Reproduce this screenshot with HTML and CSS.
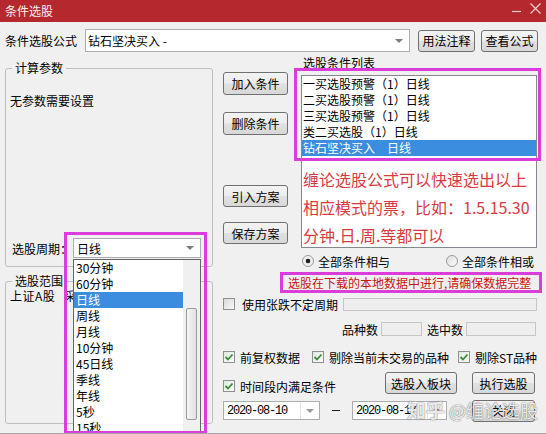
FILE: index.html
```html
<!DOCTYPE html>
<html lang="zh-CN">
<head>
<meta charset="utf-8">
<title>条件选股</title>
<link rel="stylesheet" href="styles.css">
</head>
<body>
<div class="window">
  <div class="titlebar">
    <span class="title">条件选股</span>
    <span class="winctl">
      <svg class="ico-min" width="9" height="10" viewBox="0 0 9 10"><path d="M0 5.5h9"/></svg>
      <svg class="ico-close" width="11" height="11" viewBox="0 0 11 11"><path d="M0.5 0.5l10 10M10.5 0.5l-10 10"/></svg>
    </span>
  </div>
  <div class="content">
    <div class="formula-row">
      <span class="formula-label">条件选股公式</span>
      <div class="combo combo-formula"><span class="combo-text">钻石坚决买入 -</span><span class="combo-arrow"></span></div>
      <button class="btn btn-note">用法注释</button>
      <button class="btn btn-view">查看公式</button>
    </div>
    <div class="main">
      <div class="left">
        <fieldset class="group group-params">
          <legend>计算参数</legend>
          <div class="no-param">无参数需要设置</div>
          <div class="period-row">
            <span class="period-label">选股周期：</span>
            <div class="combo combo-period"><span class="combo-text">日线</span><span class="combo-arrow"></span></div>
          </div>
        </fieldset>
        <fieldset class="group group-range">
          <legend>选股范围</legend>
          <div class="range-row"><span>上证A股</span><span class="range-more">采用</span></div>
        </fieldset>
      </div>
      <div class="right">
        <div class="right-top">
          <div class="btn-col">
            <button class="btn btn-side b-add">加入条件</button>
            <button class="btn btn-side b-del">删除条件</button>
            <button class="btn btn-side b-import">引入方案</button>
            <button class="btn btn-side b-save">保存方案</button>
          </div>
          <div class="list-col">
            <div class="list-label">选股条件列表</div>
            <ul class="cond-list">
              <li>一买选股预警（1）日线</li>
              <li>二买选股预警（1）日线</li>
              <li>三买选股预警（1）日线</li>
              <li>类二买选股（1）日线</li>
              <li class="sel">钻石坚决买入　日线</li>
            </ul>
            <div class="note">
              <div>缠论选股公式可以快速选出以上</div>
              <div>相应模式的票，比如：1.5.15.30</div>
              <div>分钟.日.周.等都可以</div>
            </div>
          </div>
        </div>
        <div class="radio-row">
          <span class="radio checked"></span><span class="radio-label">全部条件相与</span>
          <span class="radio radio-or"></span><span class="radio-label">全部条件相或</span>
        </div>
        <div class="warn">选股在下载的本地数据中进行,请确保数据完整</div>
        <div class="chk-row1">
          <span class="chk"></span><span class="chk-label">使用张跌不定周期</span>
          <span class="field"></span>
        </div>
        <div class="count-row">
          <span>品种数</span><span class="count-box cb1"></span>
          <span class="count-label2">选中数</span><span class="count-box cb2"></span>
        </div>
        <div class="chk-row2">
          <span class="chk-item"><span class="chk on"><svg width="10" height="10" viewBox="0 0 10 10"><path d="M1.5 5l2.5 2.5 4.5-5"/></svg></span><span class="chk-text">前复权数据</span></span>
          <span class="chk-item ci2"><span class="chk on"><svg width="10" height="10" viewBox="0 0 10 10"><path d="M1.5 5l2.5 2.5 4.5-5"/></svg></span><span class="chk-text">剔除当前未交易的品种</span></span>
          <span class="chk-item ci3"><span class="chk on"><svg width="10" height="10" viewBox="0 0 10 10"><path d="M1.5 5l2.5 2.5 4.5-5"/></svg></span><span class="chk-text">剔除ST品种</span></span>
        </div>
        <div class="action-row">
          <span class="chk-item ci-time"><span class="chk on"><svg width="10" height="10" viewBox="0 0 10 10"><path d="M1.5 5l2.5 2.5 4.5-5"/></svg></span><span class="chk-text">时间段内满足条件</span></span>
          <button class="btn b-block">选股入板块</button>
          <button class="btn b-run">执行选股</button>
        </div>
        <div class="date-row">
          <div class="date d1"><span class="date-text">2020-08-10</span><span class="date-drop"><span class="combo-arrow"></span></span></div>
          <span class="dash"></span>
          <div class="date d2"><span class="date-text">2020-08-17</span><span class="date-drop"><span class="combo-arrow"></span></span></div>
          <button class="btn b-close">关闭</button>
        </div>
      </div>
    </div>
  </div>

  <div class="dropdown">
    <ul class="dd-items">
      <li>30分钟</li>
      <li>60分钟</li>
      <li class="sel">日线</li>
      <li>周线</li>
      <li>月线</li>
      <li>10分钟</li>
      <li>45日线</li>
      <li>季线</li>
      <li>年线</li>
      <li>5秒</li>
      <li>15秒</li>
    </ul>
    <div class="dd-scroll"><div class="dd-thumb"></div></div>
  </div>
  <div class="frame frame-period"></div>
  <div class="frame frame-list"></div>
  <div class="watermark"><b>知乎</b> @缠论选股</div>
</div>
</body>
</html>
```

FILE: styles.css
```css
* { box-sizing: border-box; }
body {
  margin: 0;
  font-family: "Noto Sans CJK SC", "Noto Sans", sans-serif;
  font-size: 12px;
  color: #000;
  background: #f0f0f0;
}
button { font: inherit; color: #000; }
ul { margin: 0; padding: 0; list-style: none; }

.window {
  position: relative;
  width: 546px;
  height: 434px;
  overflow: hidden;
  background: #f0f0f0;
  border-bottom: 1px solid #a9a9a9;
}

/* title bar */
.titlebar {
  height: 22px;
  background: #b5292e;
  display: flex;
  align-items: center;
  padding: 0 5px 0 5px;
  color: #fff;
}
.title { line-height: 22px; font-size: 12px; color: #fbeeee; }
.winctl { margin-left: auto; display: flex; align-items: flex-start; height: 22px; }
.winctl svg { fill: none; stroke: rgba(255,235,235,0.85); stroke-width: 1.2; }
.ico-min { margin-top: 6px; }
.ico-close { margin-left: 9px; margin-top: 3px; }

.content { padding: 7px 0 0 5px; }

/* formula row */
.formula-row { display: flex; align-items: center; height: 23px; }
.formula-label { width: 80px; line-height: 23px; }
.combo {
  display: flex;
  align-items: center;
  border: 1px solid #abadb3;
  background: #fff;
}
.combo-text { flex: 1; white-space: nowrap; }
.combo-arrow {
  width: 0; height: 0;
  border-left: 4px solid transparent;
  border-right: 4px solid transparent;
  border-top: 4px solid #7d7d7d;
}
.combo-formula { width: 325px; height: 23px; padding-left: 2px; }
.combo-formula .combo-arrow { margin-right: 6px; }

.btn {
  padding: 0;
  border: 1px solid #707070;
  border-radius: 3px;
  background: linear-gradient(#f3f3f3, #ececec 48%, #e0e0e0 52%, #d8d8d8);
  text-align: center;
  white-space: nowrap;
}
.btn-note { margin-left: 8px; width: 57px; height: 22px; }
.btn-view { margin-left: 6px; width: 57px; height: 22px; }

/* main */
.main { display: grid; grid-template-columns: 208px 333px; margin-top: 4px; }
.left { padding-top: 5px; }

.group {
  margin: 0;
  padding: 0 4px;
  min-width: 0;
  border: 1px solid #bfbfbf;
  border-radius: 3px;
}
.group legend {
  padding: 0 3px;
  margin-left: 2px;
  line-height: 14px;
  font-size: 12px;
}
.group-params { height: 206px; }
.no-param { margin-top: 18px; line-height: 16px; }
.period-row { margin-top: 129px; display: flex; align-items: center; height: 20px; padding-left: 2px; }
.period-label { width: 61px; white-space: nowrap; }
.combo-period { width: 128px; height: 20px; padding-left: 3px; }
.combo-period .combo-arrow { margin-right: 6px; }

.group-range { margin-top: 7px; height: 150px; }
.range-row { line-height: 16px; white-space: nowrap; letter-spacing: 0.5px; }
.range-more { margin-left: 9px; }

/* right side */
.right { padding: 0 9px 0 10px; }
.right-top { display: flex; }
.btn-col { width: 65px; display: flex; flex-direction: column; }
.btn-side { width: 65px; height: 23px; }
.b-add { margin-top: 16px; }
.b-del { margin-top: 17px; }
.b-import { margin-top: 50px; height: 22px; }
.b-save { margin-top: 15px; height: 22px; }

.list-col { margin-left: 13px; width: 236px; }
.list-label { line-height: 14px; padding-left: 2px; }
.cond-list {
  margin-top: 5px;
  height: 86px;
  border: 1px solid #828790;
  background: #fff;
}
.cond-list li { height: 16px; line-height: 16px; padding-left: 1px; white-space: nowrap; }
.cond-list li.sel { background: #3b8ddf; color: #fff; }

.note {
  height: 87px;
  border: 1px solid #828790;
  border-top: none;
  background: #fff;
  color: #d83a40;
  font-size: 16px;
  line-height: 28px;
  padding: 4px 0 0 1px;
  white-space: nowrap;
}

.radio-row { margin-top: 5px; height: 16px; display: flex; align-items: center; padding-left: 79px; }
.radio {
  width: 12px; height: 12px;
  border-radius: 50%;
  border: 1px solid #9a9a9a;
  background: linear-gradient(135deg, #dedede, #fbfbfb);
  flex: none;
}
.radio.checked { background: radial-gradient(circle, #1f1f1f 0 2px, #e9e9e9 2.6px, #fafafa); }
.radio-label { margin-left: 4px; white-space: nowrap; }
.radio-or { margin-left: 56px; }

.warn {
  margin: 3px -5px 0 57px;
  height: 21px;
  border: 3px solid #da3dda;
  line-height: 15px;
  padding-left: 5px;
  color: #c81414;
  white-space: nowrap;
}

.chk {
  width: 12px; height: 12px;
  border: 1px solid #8e8f8f;
  background: linear-gradient(135deg, #d9d9d9, #f9f9f9);
  flex: none;
  display: flex;
  align-items: center;
  justify-content: center;
}
.chk.on { background: linear-gradient(135deg, #dfe9df, #fbfdfb); }
.chk svg { fill: none; stroke: #3c8a3c; stroke-width: 1.8; }

.chk-row1 { margin-top: 4px; height: 14px; display: flex; align-items: center; }
.chk-label { margin-left: 7px; white-space: nowrap; }
.field { flex: 1; height: 13px; margin-left: 5px; border: 1px solid #c6c6c6; background: #eeeeee; }

.count-row { margin-top: 11px; height: 14px; display: flex; align-items: center; justify-content: flex-end; padding-right: 1px; }
.count-box { height: 14px; margin-left: 3px; border: 1px solid #c6c6c6; background: #eeeeee; }
.cb1 { width: 41px; }
.cb2 { width: 70px; }
.count-label2 { margin-left: 5px; }

.chk-row2 { margin-top: 14px; height: 14px; display: flex; align-items: center; }
.chk-item { display: flex; align-items: center; white-space: nowrap; }
.chk-text { margin-left: 5px; }
.ci2 { margin-left: 12px; }
.ci3 { margin-left: 9px; }

.action-row { margin-top: 8px; height: 22px; display: flex; align-items: center; padding-right: 2px; }
.ci-time { margin-top: 6px; }
.b-block { margin-left: auto; width: 72px; height: 22px; }
.b-run { margin-left: 15px; width: 63px; height: 22px; }

.date-row { margin-top: 5px; height: 23px; display: flex; align-items: center; padding-right: 2px; }
.date {
  height: 19px;
  border: 1px solid #abadb3;
  background: #fff;
  display: flex;
  align-items: center;
}
.d1 { width: 97px; }
.d2 { width: 95px; }
.date-text {
  flex: 1;
  padding-left: 3px;
  font-family: "Liberation Mono", "DejaVu Sans Mono", monospace;
  font-size: 12px;
  letter-spacing: -1.2px;
  white-space: nowrap;
}
.date-drop {
  width: 19px; height: 17px;
  border-left: 1px solid #e3e3e3;
  display: flex;
  align-items: center;
  justify-content: center;
}
.date-drop .combo-arrow { border-top-color: #9a9a9a; }
.dash { width: 8px; height: 1px; background: #222; margin: 0 12px; }
.b-close { margin-left: auto; width: 63px; height: 22px; }

/* overlays */
.dropdown {
  position: absolute;
  left: 73px;
  top: 259px;
  width: 128px;
  height: 190px;
  border: 1px solid #646464;
  background: #fff;
  display: flex;
}
.dd-items { flex: 1; }
.dd-items li { height: 16px; line-height: 16px; padding-left: 2px; white-space: nowrap; }
.dd-items li.sel { background: #3b8ddf; color: #fff; }
.dd-scroll { width: 17px; background: #f0f0f0; padding: 48px 3px 0 3px; }
.dd-thumb {
  height: 112px;
  border: 1px solid #9b9b9b;
  border-radius: 2px;
  background: linear-gradient(90deg, #f4f4f4, #e2e2e2);
}

.frame { position: absolute; border: 3px solid #da3dda; }
.frame-period { left: 64px; top: 232px; width: 143px; height: 202px; }
.frame-list { left: 294px; top: 68px; width: 247px; height: 93px; }

.watermark {
  position: absolute;
  left: 407px;
  top: 398px;
  font-size: 18px;
  line-height: 24px;
  color: rgba(255,255,255,0.9);
  text-shadow: 0 0 1px rgba(0,0,0,0.6), 0 0 2px rgba(0,0,0,0.25);
  white-space: nowrap;
}
.watermark b { font-size: 19px; }
```
